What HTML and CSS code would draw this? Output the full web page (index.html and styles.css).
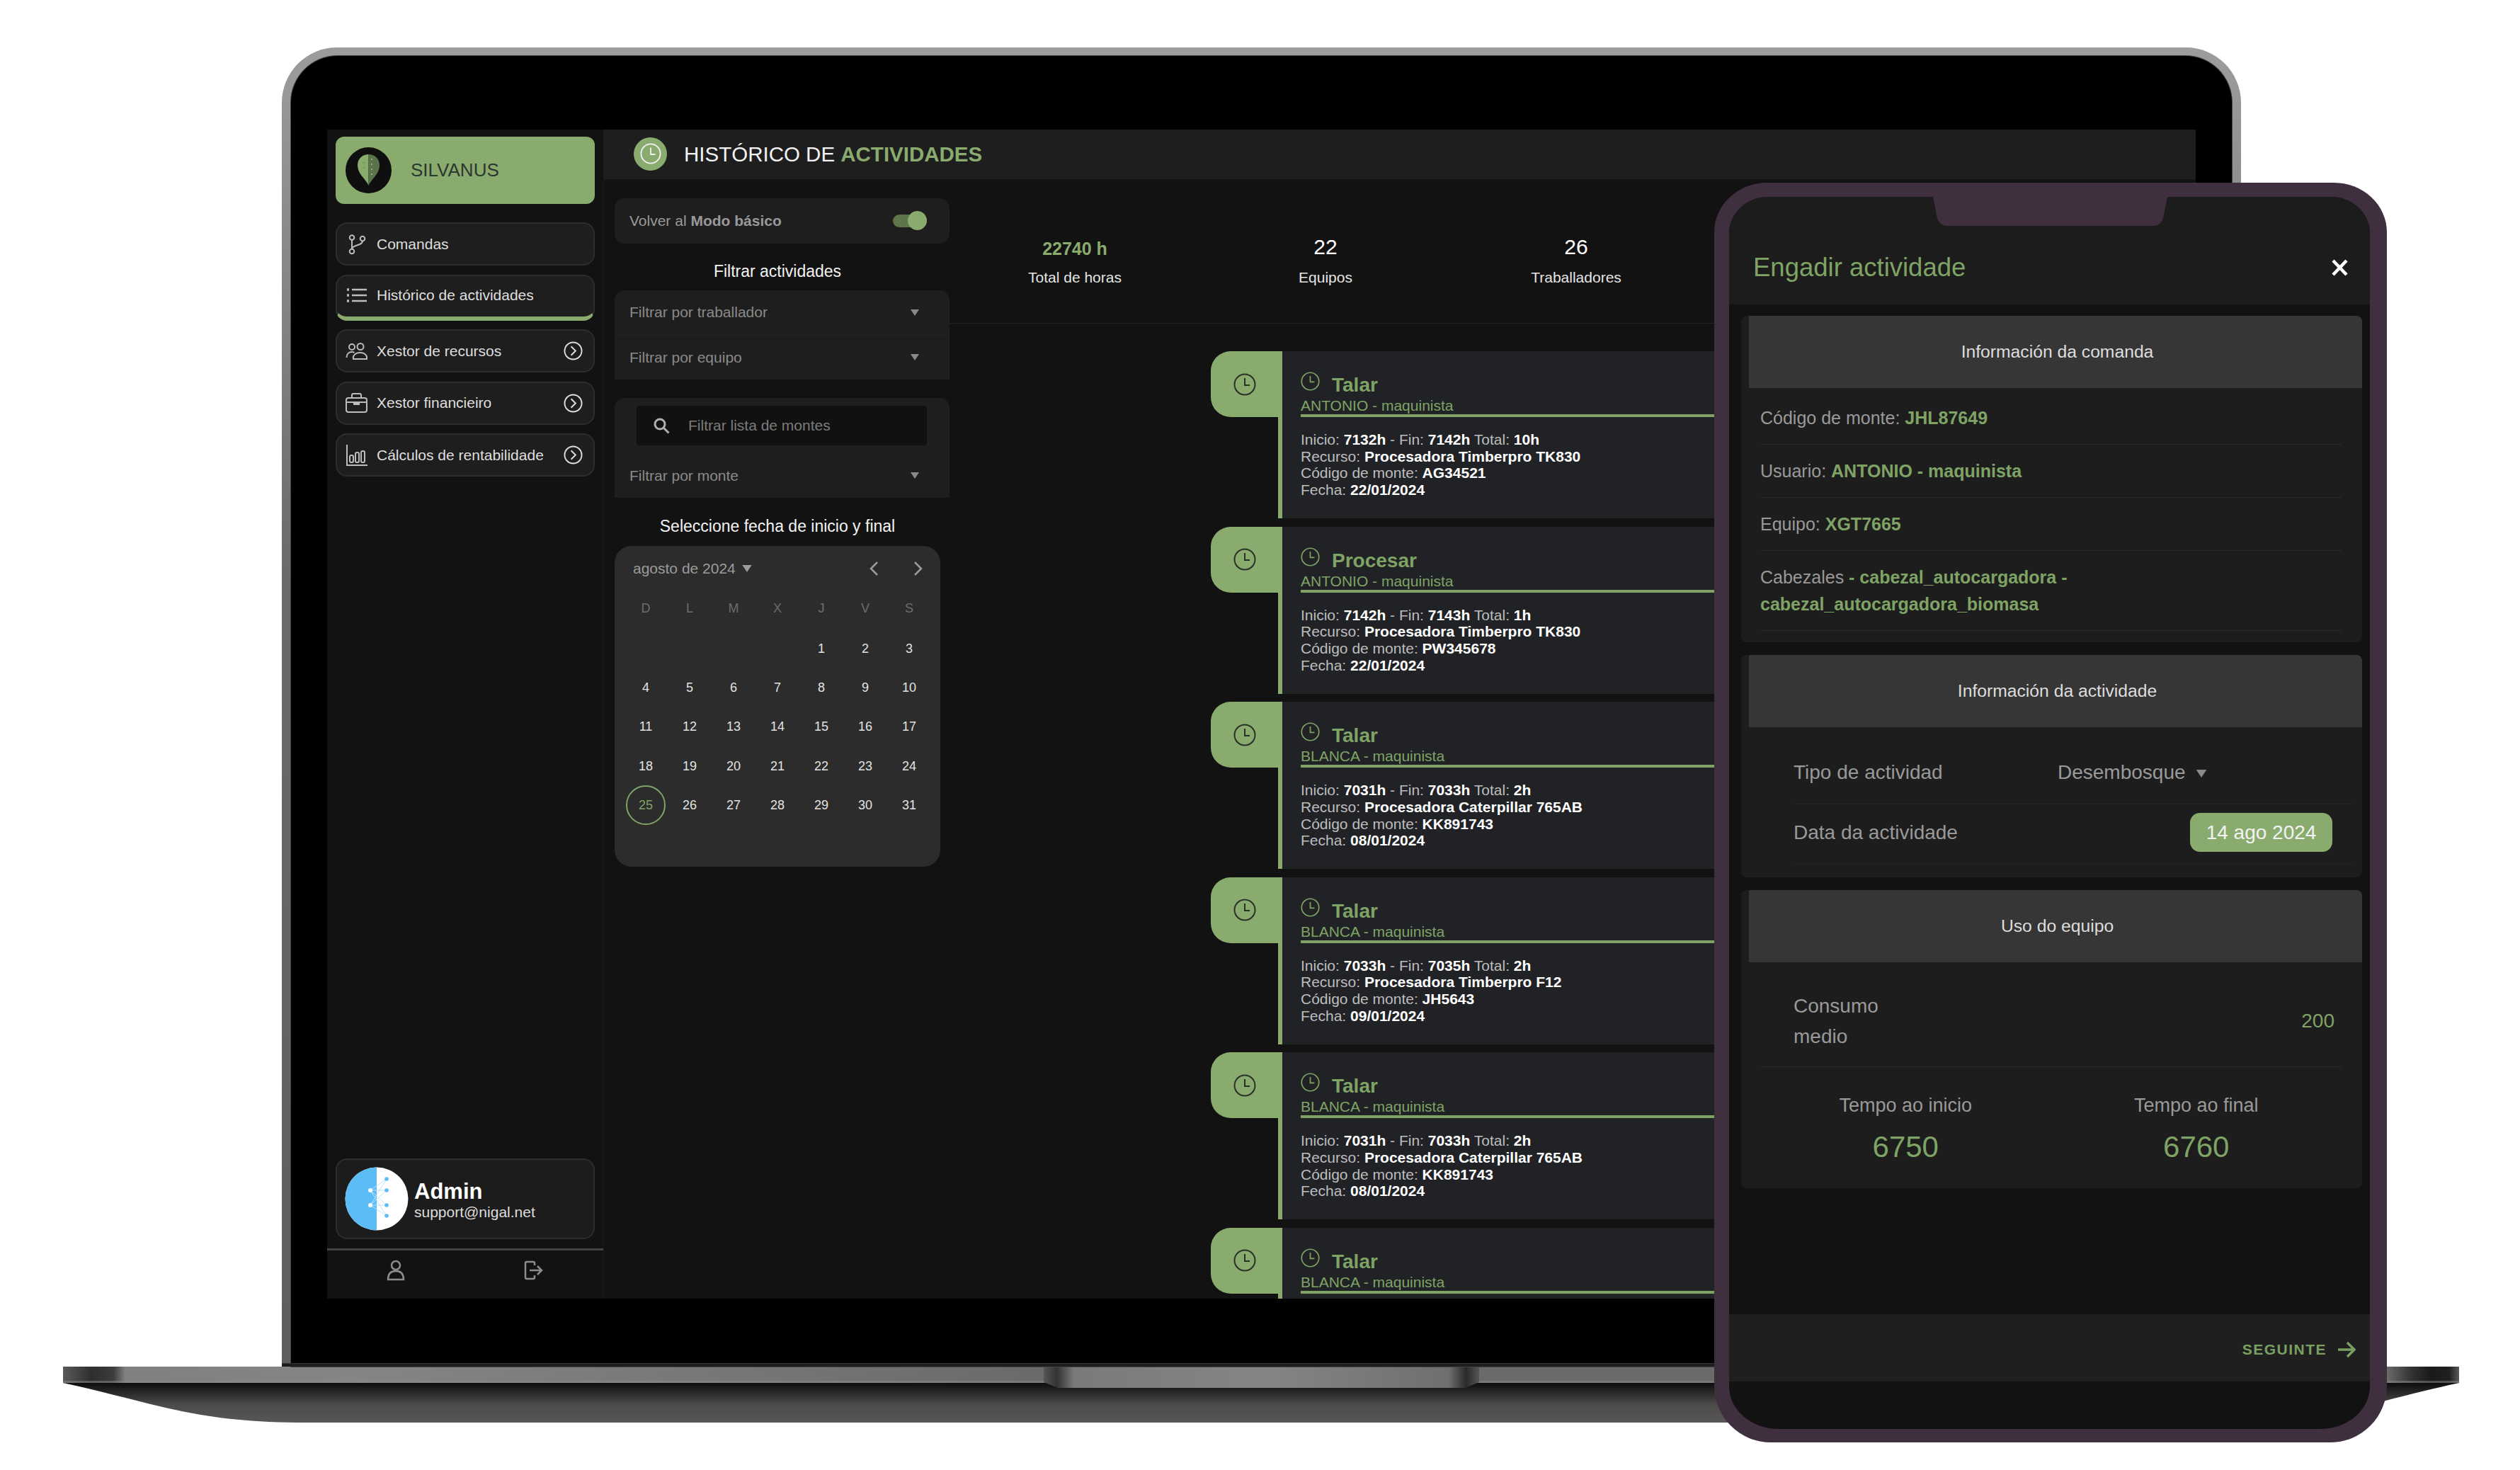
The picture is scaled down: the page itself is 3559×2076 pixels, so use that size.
FILE: index.html
```html
<!DOCTYPE html>
<html lang="gl">
<head>
    <meta charset="UTF-8">
    <meta name="viewport" content="width=device-width, initial-scale=1.0">
    <title>Silvanus</title>
    <link rel="stylesheet" href="styles.css">
</head>
<body>
    <svg class="icon-defs" aria-hidden="true">
        <symbol id="clock" viewBox="0 0 32 32">
            <circle cx="16" cy="16" r="14.5" fill="none" stroke="currentColor" stroke-width="2"/>
            <path d="M16 7v10h7" fill="none" stroke="currentColor" stroke-width="2"/>
        </symbol>
        <symbol id="go" viewBox="0 0 28 28">
            <circle cx="14" cy="14" r="12.5" fill="none" stroke="currentColor" stroke-width="2"/>
            <path d="M11 7.5l6.5 6.5-6.5 6.5" fill="none" stroke="currentColor" stroke-width="2"/>
        </symbol>
        <symbol id="caret" viewBox="0 0 12 9">
            <path d="M0 0h12L6 9z" fill="currentColor"/>
        </symbol>
    </svg>

    <div class="stage">
        <!-- laptop base -->
        <svg class="laptop-base" width="3384" height="82" viewBox="0 0 3384 82">
            <defs>
                <linearGradient id="wedge" x1="0" y1="0" x2="0" y2="1">
                    <stop offset="0" stop-color="#0d0d0d"/>
                    <stop offset="0.55" stop-color="#4c4b4a"/>
                    <stop offset="1" stop-color="#585755"/>
                </linearGradient>
                <linearGradient id="plate" gradientUnits="userSpaceOnUse" x1="0" y1="0" x2="3384" y2="0">
                    <stop offset="0" stop-color="#5a5a5a"/>
                    <stop offset="0.012" stop-color="#2e2e2e"/>
                    <stop offset="0.021" stop-color="#3c3c3c"/>
                    <stop offset="0.026" stop-color="#808080"/>
                    <stop offset="0.12" stop-color="#858585"/>
                    <stop offset="0.41" stop-color="#6b6a68"/>
                    <stop offset="0.97" stop-color="#6a6a68"/>
                    <stop offset="0.98" stop-color="#333"/>
                    <stop offset="0.988" stop-color="#1a1a1a"/>
                    <stop offset="0.996" stop-color="#202020"/>
                    <stop offset="1" stop-color="#5a5a5a"/>
                </linearGradient>
                <linearGradient id="notch" gradientUnits="userSpaceOnUse" x1="1385" y1="0" x2="2000" y2="0">
                    <stop offset="0" stop-color="#555"/>
                    <stop offset="0.03" stop-color="#333"/>
                    <stop offset="0.07" stop-color="#7a7a78"/>
                    <stop offset="0.5" stop-color="#858583"/>
                    <stop offset="0.93" stop-color="#706f6d"/>
                    <stop offset="0.97" stop-color="#2a2a2a"/>
                    <stop offset="1" stop-color="#555"/>
                </linearGradient>
            </defs>
            <path d="M0 23H3384C3250 52 3200 79 3038 79H346C184 79 134 52 0 23Z" fill="url(#wedge)"/>
            <rect width="3384" height="23" fill="url(#plate)"/>
            <rect y="20" width="3384" height="3" fill="#8a8a8a" opacity="0.5"/>
            <path d="M1385 0H2000V22L1980 30H1405L1385 22Z" fill="url(#notch)"/>
        </svg>

        <!-- laptop lid with the desktop app -->
        <div class="laptop-lid">
            <div class="laptop-screen">
                <div class="app">
                    <aside class="sidebar">
                        <div class="brand">
                            <svg class="brand-logo" width="65" height="65" viewBox="0 0 65 65">
                                <circle cx="32.5" cy="32.5" r="32.5" fill="#0f0f0f"/>
                                <path d="M32.5 54C28 44 17 38 17 25C17 16 24 10 32.5 10Z" fill="#8aab6e"/>
                                <path d="M32.5 54C37 44 48 38 48 25C48 16 41 10 32.5 10Z" fill="#5a7349"/>
                                <circle cx="37" cy="17" r="1" fill="#a9c08f"/>
                                <circle cx="37" cy="24" r="1" fill="#a9c08f"/>
                                <circle cx="37" cy="31" r="1" fill="#a9c08f"/>
                                <circle cx="37" cy="38" r="1" fill="#a9c08f"/>
                                <circle cx="26" cy="22" r="1" fill="#6f8c58"/>
                                <circle cx="26" cy="29" r="1" fill="#6f8c58"/>
                            </svg>
                            <span>SILVANUS</span>
                        </div>

                        <nav class="nav">
                            <a class="nav-item">
                                <svg class="nav-icon" width="31" height="30" viewBox="0 0 31 30" fill="none" stroke="currentColor" stroke-width="2">
                                    <circle cx="9" cy="5.5" r="3.3"/>
                                    <circle cx="9" cy="25" r="3.3"/>
                                    <circle cx="24" cy="7" r="3.3"/>
                                    <path d="M9 9v12.500M24 10.500c0 7-15 5-15 11"/>
                                </svg>
                                Comandas
                            </a>
                            <a class="nav-item active">
                                <svg class="nav-icon" width="31" height="22" viewBox="0 0 31 22" fill="none" stroke="currentColor" stroke-width="2.500">
                                    <path d="M9 3h21M9 11h21M9 19h21"/>
                                    <path d="M2 3h3M2 11h3M2 19h3" stroke-width="3.500"/>
                                </svg>
                                Histórico de actividades
                            </a>
                            <a class="nav-item">
                                <svg class="nav-icon" width="31" height="24" viewBox="0 0 31 24" fill="none" stroke="currentColor" stroke-width="2">
                                    <circle cx="9" cy="6" r="4"/>
                                    <circle cx="21" cy="5.500" r="4.500"/>
                                    <path d="M1.500 21c0-5 3-8 7.500-8 1.500 0 2.500.3 3.500 1"/>
                                    <path d="M11 23c-1-5 3-9 9.500-9S31 18 30 23z"/>
                                </svg>
                                Xestor de recursos
                                <svg class="nav-go"><use href="#go"/></svg>
                            </a>
                            <a class="nav-item">
                                <svg class="nav-icon" width="31" height="28" viewBox="0 0 31 28" fill="none" stroke="currentColor" stroke-width="2">
                                    <rect x="1" y="7" width="29" height="20" rx="3"/>
                                    <path d="M9 7V3a2 2 0 0 1 2-2h9a2 2 0 0 1 2 2v4M1 13h29"/>
                                    <path d="M12 13h7v3h-7z" fill="currentColor"/>
                                </svg>
                                Xestor financieiro
                                <svg class="nav-go"><use href="#go"/></svg>
                            </a>
                            <a class="nav-item">
                                <svg class="nav-icon" width="31" height="30" viewBox="0 0 31 30" fill="none" stroke="currentColor" stroke-width="2">
                                    <path d="M2 0v29h29"/>
                                    <rect x="6" y="15" width="5" height="10" rx="2"/>
                                    <rect x="14" y="11" width="5" height="14" rx="2"/>
                                    <rect x="22" y="9" width="5" height="16" rx="2"/>
                                </svg>
                                Cálculos de rentabilidade
                                <svg class="nav-go"><use href="#go"/></svg>
                            </a>
                        </nav>

                        <div class="sidebar-bottom">
                            <div class="user-card">
                                <svg class="avatar" width="90" height="90" viewBox="0 0 90 90">
                                    <circle cx="45" cy="45" r="44.500" fill="#fff"/>
                                    <path d="M45 .5a44.500 44.500 0 0 0 0 89z" fill="#5cbcf6"/>
                                    <path d="M36 33L59 17M36 33L59 33M36 33L59 54M36 33L59 69M36 54L59 17M36 54L59 33M36 54L59 54M36 54L59 69" fill="none" stroke="#bfe3fb" stroke-width="1"/>
                                    <circle cx="36" cy="33" r="3" fill="#fff"/>
                                    <circle cx="36" cy="54" r="3" fill="#fff"/>
                                    <circle cx="59" cy="17" r="2.800" fill="#5cbcf6"/>
                                    <circle cx="59" cy="33" r="2.800" fill="#5cbcf6"/>
                                    <circle cx="59" cy="54" r="2.800" fill="#5cbcf6"/>
                                    <circle cx="59" cy="69" r="2.800" fill="#5cbcf6"/>
                                </svg>
                                <div class="user-text">
                                    <div class="user-name">Admin</div>
                                    <div class="user-mail">support@nigal.net</div>
                                </div>
                            </div>
                            <div class="sidebar-actions">
                                <svg width="28" height="30" viewBox="0 0 28 30" fill="none" stroke="currentColor" stroke-width="2.500">
                                    <circle cx="14" cy="8" r="6"/>
                                    <path d="M3 28c0-8 4-12 11-12s11 4 11 12z"/>
                                </svg>
                                <svg width="28" height="28" viewBox="0 0 28 28" fill="none" stroke="currentColor" stroke-width="2.500">
                                    <path d="M16 7V4a2 2 0 0 0-2-2H5a2 2 0 0 0-2 2v20a2 2 0 0 0 2 2h9a2 2 0 0 0 2-2v-3"/>
                                    <path d="M9 14h17M20 8l6 6-6 6"/>
                                </svg>
                            </div>
                        </div>
                    </aside>

                    <main class="main">
                        <header class="topbar">
                            <span class="topbar-badge"><svg width="30" height="30"><use href="#clock"/></svg></span>
                            <h1>HISTÓRICO DE <b>ACTIVIDADES</b></h1>
                        </header>

                        <div class="main-body">
                            <section class="filters">
                                <div class="panel mode-row">
                                    <span>Volver al <b>Modo básico</b></span>
                                    <span class="toggle"><i></i></span>
                                </div>

                                <h2>Filtrar actividades</h2>
                                <div class="panel filter-group">
                                    <div class="filter-row">Filtrar por traballador <svg class="caret"><use href="#caret"/></svg></div>
                                    <div class="filter-row">Filtrar por equipo <svg class="caret"><use href="#caret"/></svg></div>
                                </div>

                                <div class="panel filter-group search-group">
                                    <div class="search">
                                        <svg width="23" height="23" viewBox="0 0 23 23" fill="none" stroke="currentColor" stroke-width="3">
                                            <circle cx="9" cy="9" r="7"/>
                                            <path d="M14 14l7.500 7.500"/>
                                        </svg>
                                        Filtrar lista de montes
                                    </div>
                                    <div class="filter-row">Filtrar por monte <svg class="caret"><use href="#caret"/></svg></div>
                                </div>

                                <h2 class="calendar-title">Seleccione fecha de inicio y final</h2>
                                <div class="calendar">
                                    <div class="calendar-head">
                                        <span>agosto de 2024</span>
                                        <svg class="calendar-caret"><use href="#caret"/></svg>
                                        <svg class="chevron chevron-prev" width="14" height="22" viewBox="0 0 14 22"><path d="M12 2L3 11l9 9" fill="none" stroke="currentColor" stroke-width="2.500"/></svg>
                                        <svg class="chevron" width="14" height="22" viewBox="0 0 14 22"><path d="M2 2l9 9-9 9" fill="none" stroke="currentColor" stroke-width="2.500"/></svg>
                                    </div>
                                    <div class="calendar-grid">
                                        <span class="weekday">D</span><span class="weekday">L</span><span class="weekday">M</span><span class="weekday">X</span><span class="weekday">J</span><span class="weekday">V</span><span class="weekday">S</span>
                                        <span></span><span></span><span></span><span></span><span>1</span><span>2</span><span>3</span>
                                        <span>4</span><span>5</span><span>6</span><span>7</span><span>8</span><span>9</span><span>10</span>
                                        <span>11</span><span>12</span><span>13</span><span>14</span><span>15</span><span>16</span><span>17</span>
                                        <span>18</span><span>19</span><span>20</span><span>21</span><span>22</span><span>23</span><span>24</span>
                                        <span class="today">25</span><span>26</span><span>27</span><span>28</span><span>29</span><span>30</span><span>31</span>
                                    </div>
                                </div>
                            </section>

                            <section class="results">
                                <div class="stats">
                                    <div class="stat">
                                        <div class="stat-value green">22740 h</div>
                                        <div class="stat-label">Total de horas</div>
                                    </div>
                                    <div class="stat">
                                        <div class="stat-value">22</div>
                                        <div class="stat-label">Equipos</div>
                                    </div>
                                    <div class="stat">
                                        <div class="stat-value">26</div>
                                        <div class="stat-label">Traballadores</div>
                                    </div>
                                </div>

                                <div class="timeline">
                                    <article class="activity">
                                        <div class="activity-side">
                                            <div class="activity-tab"><svg width="32" height="32"><use href="#clock"/></svg></div>
                                            <div class="activity-stem"></div>
                                        </div>
                                        <div class="activity-body">
                                            <div class="activity-title"><svg width="27" height="27"><use href="#clock"/></svg><span>Talar</span></div>
                                            <div class="activity-who">ANTONIO - maquinista</div>
                                            <p>Inicio: <b>7132h</b> - Fin: <b>7142h</b> Total: <b>10h</b><br>Recurso: <b>Procesadora Timberpro TK830</b><br>Código de monte: <b>AG34521</b><br>Fecha: <b>22/01/2024</b></p>
                                        </div>
                                    </article>
                                    <article class="activity">
                                        <div class="activity-side">
                                            <div class="activity-tab"><svg width="32" height="32"><use href="#clock"/></svg></div>
                                            <div class="activity-stem"></div>
                                        </div>
                                        <div class="activity-body">
                                            <div class="activity-title"><svg width="27" height="27"><use href="#clock"/></svg><span>Procesar</span></div>
                                            <div class="activity-who">ANTONIO - maquinista</div>
                                            <p>Inicio: <b>7142h</b> - Fin: <b>7143h</b> Total: <b>1h</b><br>Recurso: <b>Procesadora Timberpro TK830</b><br>Código de monte: <b>PW345678</b><br>Fecha: <b>22/01/2024</b></p>
                                        </div>
                                    </article>
                                    <article class="activity">
                                        <div class="activity-side">
                                            <div class="activity-tab"><svg width="32" height="32"><use href="#clock"/></svg></div>
                                            <div class="activity-stem"></div>
                                        </div>
                                        <div class="activity-body">
                                            <div class="activity-title"><svg width="27" height="27"><use href="#clock"/></svg><span>Talar</span></div>
                                            <div class="activity-who">BLANCA - maquinista</div>
                                            <p>Inicio: <b>7031h</b> - Fin: <b>7033h</b> Total: <b>2h</b><br>Recurso: <b>Procesadora Caterpillar 765AB</b><br>Código de monte: <b>KK891743</b><br>Fecha: <b>08/01/2024</b></p>
                                        </div>
                                    </article>
                                    <article class="activity">
                                        <div class="activity-side">
                                            <div class="activity-tab"><svg width="32" height="32"><use href="#clock"/></svg></div>
                                            <div class="activity-stem"></div>
                                        </div>
                                        <div class="activity-body">
                                            <div class="activity-title"><svg width="27" height="27"><use href="#clock"/></svg><span>Talar</span></div>
                                            <div class="activity-who">BLANCA - maquinista</div>
                                            <p>Inicio: <b>7033h</b> - Fin: <b>7035h</b> Total: <b>2h</b><br>Recurso: <b>Procesadora Timberpro F12</b><br>Código de monte: <b>JH5643</b><br>Fecha: <b>09/01/2024</b></p>
                                        </div>
                                    </article>
                                    <article class="activity">
                                        <div class="activity-side">
                                            <div class="activity-tab"><svg width="32" height="32"><use href="#clock"/></svg></div>
                                            <div class="activity-stem"></div>
                                        </div>
                                        <div class="activity-body">
                                            <div class="activity-title"><svg width="27" height="27"><use href="#clock"/></svg><span>Talar</span></div>
                                            <div class="activity-who">BLANCA - maquinista</div>
                                            <p>Inicio: <b>7031h</b> - Fin: <b>7033h</b> Total: <b>2h</b><br>Recurso: <b>Procesadora Caterpillar 765AB</b><br>Código de monte: <b>KK891743</b><br>Fecha: <b>08/01/2024</b></p>
                                        </div>
                                    </article>
                                    <article class="activity">
                                        <div class="activity-side">
                                            <div class="activity-tab"><svg width="32" height="32"><use href="#clock"/></svg></div>
                                            <div class="activity-stem"></div>
                                        </div>
                                        <div class="activity-body">
                                            <div class="activity-title"><svg width="27" height="27"><use href="#clock"/></svg><span>Talar</span></div>
                                            <div class="activity-who">BLANCA - maquinista</div>
                                        </div>
                                    </article>
                                </div>
                            </section>
                        </div>
                    </main>
                </div>
            </div>
            <div class="laptop-hinge"></div>
        </div>

        <!-- phone with the mobile dialog -->
        <div class="phone">
            <svg class="phone-notch" width="331" height="41" viewBox="0 0 331 41">
                <path d="M0 0H331L325 30Q322 41 310 41H21Q9 41 6 30Z"/>
            </svg>
            <div class="phone-screen">
                <header class="dialog-head">
                    <h2>Engadir actividade</h2>
                    <svg width="25" height="24" viewBox="0 0 25 24"><path d="M3 2l19 20M22 2L3 22" fill="none" stroke="#fff" stroke-width="4.500"/></svg>
                </header>

                <div class="dialog-body">
                    <section class="dialog-card">
                        <h3>Información da comanda</h3>
                        <div class="info-list">
                            <div class="info-row">Código de monte: <b>JHL87649</b></div>
                            <div class="info-row">Usuario: <b>ANTONIO - maquinista</b></div>
                            <div class="info-row">Equipo: <b>XGT7665</b></div>
                            <div class="info-row">Cabezales <b>- cabezal_autocargadora -<br>cabezal_autocargadora_biomasa</b></div>
                        </div>
                    </section>

                    <section class="dialog-card dialog-card-form">
                        <h3>Información da actividade</h3>
                        <div class="form-list">
                            <div class="form-row">
                                <span>Tipo de actividad</span>
                                <span class="form-select">Desembosque <svg class="caret"><use href="#caret"/></svg></span>
                            </div>
                            <div class="form-row">
                                <span>Data da actividade</span>
                                <span class="date-chip">14 ago 2024</span>
                            </div>
                        </div>
                    </section>

                    <section class="dialog-card">
                        <h3>Uso do equipo</h3>
                        <div class="usage-row">
                            <span>Consumo<br>medio</span>
                            <span class="usage-value green">200</span>
                        </div>
                        <div class="usage-times">
                            <div>
                                <div class="time-label">Tempo ao inicio</div>
                                <div class="time-value">6750</div>
                            </div>
                            <div>
                                <div class="time-label">Tempo ao final</div>
                                <div class="time-value">6760</div>
                            </div>
                        </div>
                    </section>
                </div>

                <footer class="dialog-foot">
                    <span>SEGUINTE</span>
                    <svg width="26" height="24" viewBox="0 0 26 24"><path d="M1 12h22M14 2l10 10-10 10" fill="none" stroke="currentColor" stroke-width="3.500"/></svg>
                </footer>
            </div>
        </div>
    </div>
</body>
</html>
```

FILE: styles.css
```css
/* Page */
* {
    box-sizing: border-box;
}

body {
    margin: 0;
    background-color: #fff;
    font-family: 'Liberation Sans', Arial, sans-serif;
    color: #ddd;
}

h1, h2, h3, p {
    margin: 0;
    font-weight: normal;
}

.icon-defs {
    display: none;
}

.green {
    color: #7fa365;
}

.stage {
    position: relative;
    width: 3559px;
    height: 2076px;
    overflow: hidden;
}

/* Laptop */
.laptop-base {
    position: absolute;
    left: 89px;
    top: 1930px;
}

.laptop-lid {
    position: absolute;
    left: 398px;
    top: 67px;
    width: 2767px;
    height: 1863px;
    padding: 12px 13px 0;
    border-radius: 78px 78px 0 0;
    background: linear-gradient(#9c9c9c, #6a6a6a 40%, #5e5e5e);
}

.laptop-screen {
    height: 100%;
    padding: 104px 0 0 51px;
    background-color: #000;
    border-radius: 66px 66px 0 0;
    box-shadow: 0 0 0 1px #444;
}

.laptop-hinge {
    position: absolute;
    left: 0;
    right: 0;
    bottom: 0;
    height: 5px;
    background-color: #1d1d1d;
    border-top: 1px solid #333;
}

/* App */
.app {
    display: flex;
    width: 2639px;
    height: 1651px;
    background-color: #121212;
    overflow: hidden;
}

.sidebar {
    display: flex;
    flex-direction: column;
    flex: 0 0 391px;
    padding: 10px 0 0 12px;
    border-right: 1px solid #1c1c1c;
}

.brand {
    display: flex;
    align-items: center;
    width: 366px;
    height: 95px;
    padding-left: 14px;
    gap: 27px;
    background-color: #8aab6e;
    border-radius: 12px;
    color: #2b3730;
    font-size: 26px;
}

.nav {
    display: flex;
    flex-direction: column;
    gap: 12.500px;
    width: 366px;
    margin-top: 26px;
}

.nav-item {
    display: flex;
    align-items: center;
    height: 61px;
    padding: 0 15px 0 12px;
    background-color: #1e1e1e;
    border: 2px solid #2d2d2d;
    border-radius: 16px;
    color: #dedede;
    font-size: 21px;
}

.nav-item.active {
    height: 65px;
    padding-bottom: 2px;
    border-bottom: 6px solid #8aab6e;
}

.nav-icon {
    flex: none;
    margin-right: 13px;
    color: #bcbcbc;
}

.nav-go {
    width: 27px;
    height: 27px;
    margin-left: auto;
    color: #dedede;
}

.sidebar-bottom {
    margin-top: auto;
    margin-left: -12px;
}

.user-card {
    display: flex;
    align-items: center;
    width: 366px;
    height: 114px;
    margin-left: 12px;
    padding-left: 11px;
    gap: 8px;
    background-color: #1c1c1c;
    border: 2px solid #2d2d2d;
    border-radius: 16px;
}

.avatar {
    flex: none;
}

.user-text {
    padding-top: 3px;
}

.user-name {
    color: #fff;
    font-size: 31px;
    font-weight: bold;
    line-height: 34px;
}

.user-mail {
    color: #ddd;
    font-size: 21px;
    line-height: 24px;
}

.sidebar-actions {
    display: grid;
    grid-template-columns: 194px 194px;
    justify-items: center;
    align-items: center;
    height: 71px;
    margin-top: 13px;
    padding-bottom: 13px;
    border-top: 3px solid #444;
    color: #8c8c8c;
}

.main {
    flex: 1;
    min-width: 0;
}

.topbar {
    display: flex;
    align-items: center;
    height: 70px;
    padding-left: 42px;
    gap: 24px;
    background-color: #1e1e1e;
}

.topbar-badge {
    display: flex;
    align-items: center;
    justify-content: center;
    width: 47px;
    height: 47px;
    margin-top: -2px;
    background-color: #8aab6e;
    border-radius: 50%;
    color: #f0f0f0;
}

.topbar h1 {
    color: #f2f2f2;
    font-size: 29.500px;
}

.topbar h1 b {
    color: #8aab6e;
}

.main-body {
    display: flex;
}

/* Filters column */
.filters {
    flex: 0 0 488px;
    width: 488px;
    padding: 27px 0 0 15px;
}

.filters h2 {
    height: 26px;
    margin: 26px 13px 14px 0;
    color: #f2f2f2;
    font-size: 23px;
    line-height: 26px;
    text-align: center;
}

.filters .calendar-title {
    margin: 27px 13px 15px 0;
}

.panel {
    background-color: #1e1e1e;
    border-radius: 14px;
    color: #8a8a8a;
    font-size: 21px;
}

.mode-row {
    display: flex;
    align-items: center;
    justify-content: space-between;
    height: 64px;
    padding: 0 32px 0 21px;
    color: #999;
}

.toggle {
    position: relative;
    width: 48px;
    height: 18px;
    background-color: #5d7549;
    border-radius: 9px;
}

.toggle i {
    position: absolute;
    right: 0;
    top: -5px;
    width: 27px;
    height: 27px;
    background-color: #8aab6e;
    border-radius: 50%;
}

.filter-group {
    border-radius: 14px 14px 0 0;
}

.filter-row {
    display: flex;
    align-items: center;
    justify-content: space-between;
    height: 63px;
    padding: 0 43px 0 21px;
    border-bottom: 1px solid #232323;
}

.filter-row:last-child {
    border-bottom: 0;
}

.caret {
    width: 12px;
    height: 9px;
    color: #8a8a8a;
}

.search-group {
    margin-top: 26px;
    padding-top: 11px;
}

.search-group .filter-row {
    margin-top: 11px;
}

.search {
    display: flex;
    align-items: center;
    height: 56px;
    margin: 0 32px 0 31px;
    padding-left: 24px;
    gap: 26px;
    background-color: #111;
    border-radius: 4px;
    color: #7c7c7c;
}

.search svg {
    color: #b0b0b0;
}

.calendar {
    width: 460px;
    height: 453px;
    padding: 3px 0 0 13px;
    background-color: #2c2c2c;
    border-radius: 24px;
}

.calendar-head {
    display: flex;
    align-items: center;
    height: 57px;
    padding: 0 24px 0 13px;
    color: #9b9b9b;
    font-size: 21px;
}

.calendar-caret {
    width: 16px;
    height: 10px;
    margin-left: 8px;
    color: #9b9b9b;
}

.chevron {
    margin-left: 49px;
}

.chevron-prev {
    margin-left: auto;
}

.calendar-grid {
    display: grid;
    grid-template-columns: repeat(7, 62px);
    grid-template-rows: 57.500px;
    grid-auto-rows: 55.300px;
    place-items: center;
    color: #e2e2e2;
    font-size: 18px;
}

.calendar-grid span {
    display: flex;
    align-items: center;
    justify-content: center;
    width: 56px;
    height: 56px;
}

.calendar-grid .weekday {
    color: #6d6d6d;
}

.calendar-grid .today {
    border: 2px solid #7fa365;
    border-radius: 50%;
    color: #7fa365;
}

/* Results */
.results {
    flex: 1;
    min-width: 0;
}

.stats {
    display: grid;
    grid-template-columns: repeat(5, 354px);
    height: 204px;
    padding-top: 76px;
    border-bottom: 1px solid #202026;
}

.stat {
    text-align: center;
}

.stat-value {
    height: 40px;
    color: #fff;
    font-size: 30px;
    line-height: 40px;
}

.stat-value.green {
    color: #8aab6e;
    font-size: 25px;
    font-weight: bold;
    line-height: 44px;
}

.stat-label {
    margin-top: 12px;
    color: #e4e4e4;
    font-size: 21px;
    line-height: 22px;
}

.timeline {
    display: flex;
    flex-direction: column;
    gap: 11.600px;
    padding: 39px 0 0 369px;
}

.activity {
    display: flex;
    flex: none;
    height: 236px;
}

.activity-side {
    display: flex;
    flex-direction: column;
    flex: 0 0 101px;
}

.activity-tab {
    display: flex;
    align-items: center;
    justify-content: center;
    height: 93px;
    padding-right: 6px;
    background-color: #8aab6e;
    border-radius: 28px 0 0 28px;
    color: #2a3028;
}

.activity-stem {
    flex: 1;
    width: 6px;
    margin-left: auto;
    background-color: #8aab6e;
}

.activity-body {
    flex: 1;
    padding: 29px 0 0 26px;
    background-color: #212226;
}

.activity-title {
    display: flex;
    align-items: flex-start;
    gap: 17px;
    height: 36px;
    color: #7fa365;
}

.activity-title span {
    margin-top: 3px;
    font-size: 28px;
    font-weight: bold;
    line-height: 32px;
}

.activity-who {
    height: 25px;
    padding-bottom: 1px;
    color: #7fa365;
    font-size: 21px;
    line-height: 24px;
}

.activity-who::after {
    content: "";
    display: block;
    height: 4px;
    background-color: #7fa365;
}

.activity-body p {
    margin-top: 23px;
    color: #bdbdbd;
    font-size: 21px;
    line-height: 23.700px;
}

.activity-body p b {
    color: #fff;
}

/* Phone */
.phone {
    position: absolute;
    left: 2421px;
    top: 258px;
    width: 950px;
    height: 1779px;
    padding: 20px 24px 19px 21px;
    background-color: #40303f;
    border-radius: 75px 75px 80px 80px / 70px 70px 80px 80px;
}

.phone-notch {
    position: absolute;
    left: 309px;
    top: 20px;
    fill: #40303f;
}

.phone-screen {
    display: flex;
    flex-direction: column;
    height: 100%;
    padding-bottom: 67px;
    background-color: #121212;
    border-radius: 55px 55px 70px 70px / 52px 52px 60px 60px;
    overflow: hidden;
}

.dialog-head {
    display: flex;
    align-items: center;
    justify-content: space-between;
    flex: 0 0 152px;
    padding: 48px 30px 0 34px;
    background-color: #1c1c1c;
}

.dialog-head h2 {
    color: #7fa365;
    font-size: 36.500px;
}

.dialog-body {
    flex: 1;
    padding: 16px 11px 0 17px;
}

.dialog-card {
    margin-bottom: 18px;
    padding-bottom: 16px;
    background-color: #1d1d1d;
    border-radius: 8px;
    color: #999;
    font-size: 25px;
}

.dialog-card h3 {
    height: 102px;
    margin-left: 11px;
    padding-left: 5px;
    background-color: #363636;
    border-radius: 0 8px 0 0;
    color: #ddd;
    font-size: 24.700px;
    line-height: 102px;
    text-align: center;
}

.info-list {
    margin: 5px 29px 0 27px;
}

.info-row {
    padding: 18px 0;
    border-bottom: 1px solid #2a2a2a;
    line-height: 38px;
}

.info-row b {
    color: #7fa365;
}

.dialog-card-form {
    padding-bottom: 18px;
}

.form-list {
    margin: 24px 11px 0 74px;
    font-size: 28px;
}

.form-row {
    display: grid;
    grid-template-columns: 373px 1fr;
    align-items: center;
    height: 85px;
    padding-bottom: 5px;
    border-bottom: 1px solid #232323;
}

.form-select .caret {
    width: 18px;
    height: 11px;
    margin-left: 6px;
    vertical-align: 2px;
}

.date-chip {
    justify-self: end;
    width: 201px;
    margin-right: 31px;
    background-color: #8aab6e;
    border-radius: 14px;
    color: #f2f2f2;
    line-height: 55px;
    text-align: center;
}

.usage-row {
    display: flex;
    align-items: center;
    justify-content: space-between;
    margin: 0 29px 0 27px;
    padding: 40px 10px 21px 47px;
    border-bottom: 1px solid #2a2a2a;
    font-size: 28px;
    line-height: 43px;
}

.usage-value {
    margin-bottom: 2px;
}

.usage-times {
    display: grid;
    grid-template-columns: 1fr 1fr;
    margin: 0 29px 0 27px;
    padding: 37px 0 17px;
    text-align: center;
}

.time-label {
    font-size: 27px;
    line-height: 34px;
}

.time-value {
    margin-top: 17px;
    color: #7fa365;
    font-size: 42px;
    line-height: 50px;
}

.dialog-foot {
    display: flex;
    align-items: center;
    justify-content: flex-end;
    flex: 0 0 95px;
    padding: 5px 20px 0 0;
    gap: 15px;
    background-color: #1f1f1f;
    color: #7a9f62;
}

.dialog-foot span {
    font-size: 21px;
    font-weight: bold;
    letter-spacing: 1.500px;
}
```
